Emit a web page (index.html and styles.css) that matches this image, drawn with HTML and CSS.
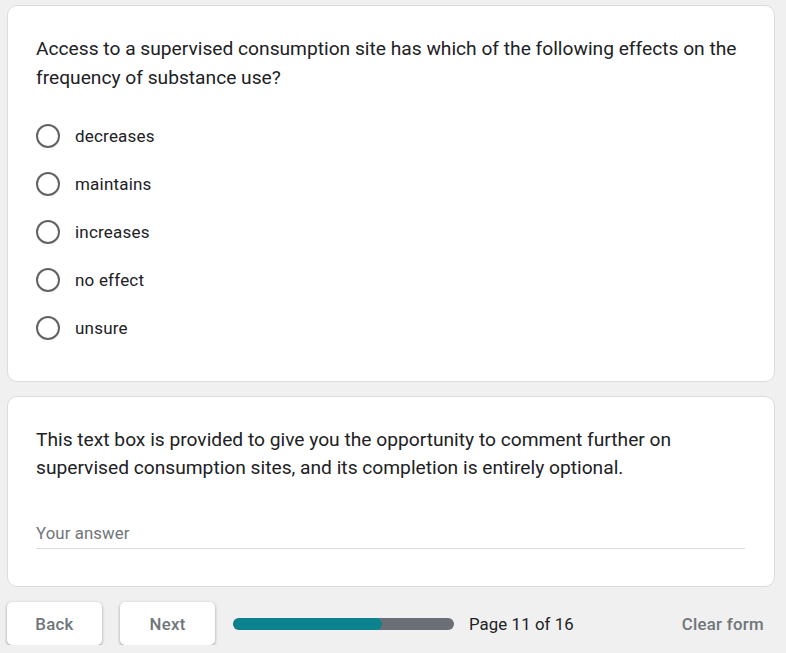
FILE: index.html
```html
<!DOCTYPE html>
<html>
<head>
<meta charset="utf-8">
<link rel="stylesheet" href="styles.css">
</head>
<body>
<main class="form">
  <section class="card">
    <div class="title">Access to a supervised consumption site has which of the following effects on the frequency of substance use?</div>
    <div class="options">
      <label class="option"><span class="radio"></span><span class="opt-text">decreases</span></label>
      <label class="option"><span class="radio"></span><span class="opt-text">maintains</span></label>
      <label class="option"><span class="radio"></span><span class="opt-text">increases</span></label>
      <label class="option"><span class="radio"></span><span class="opt-text">no effect</span></label>
      <label class="option"><span class="radio"></span><span class="opt-text">unsure</span></label>
    </div>
  </section>
  <section class="card card2">
    <div class="title">This text box is provided to give you the opportunity to comment further on supervised consumption sites, and its completion is entirely optional.</div>
    <div class="answer">Your answer</div>
  </section>
  <nav class="nav">
    <button class="btn">Back</button>
    <button class="btn">Next</button>
    <div class="progress"><div class="fill" style="width:67.5%"></div></div>
    <span class="page">Page 11 of 16</span>
    <span class="spacer"></span>
    <button class="clear">Clear form</button>
  </nav>
</main>
</body>
</html>
```
FILE: styles.css
```css
html, body {
  margin: 0;
  padding: 0;
  background: #f0f0f0;
}
body {
  font-family: Roboto, "Noto Sans", Arial, sans-serif;
  color: #202124;
}
.form {
  width: 768px;
  margin: 5px 0 0 7px;
}
.card {
  background: #fff;
  border: 1px solid #dadce0;
  border-radius: 10px;
  padding: 29px 29px 29px 28px;
  box-sizing: border-box;
}
.title {
  font-size: 19.2px;
  line-height: 28.8px;
  letter-spacing: 0;
  color: #202124;
}
.options {
  margin-top: 19px;
}
.option {
  display: flex;
  align-items: center;
  height: 48px;
}
.radio {
  width: 24px;
  height: 24px;
  box-sizing: border-box;
  border: 2.4px solid #5f6368;
  border-radius: 50%;
  flex: none;
}
.opt-text {
  margin-left: 15px;
  font-size: 17px;
  letter-spacing: 0.2px;
  color: #202124;
}
.card2 {
  margin-top: 14px;
  padding-bottom: 37px;
}
.answer {
  margin-top: 38px;
  font-size: 16.8px;
  line-height: 24px;
  color: #70757a;
  letter-spacing: 0.1px;
  padding-bottom: 3px;
  border-bottom: 1px solid #dadce0;
}
.nav {
  display: flex;
  align-items: center;
  margin-top: 15px;
}
.btn {
  width: 95px;
  height: 43px;
  border: none;
  border-radius: 5px;
  background: #fff;
  box-shadow: 0 1px 2px rgba(60,64,67,.3), 0 1px 3px 1px rgba(60,64,67,.15);
  font-family: Roboto, Arial, sans-serif;
  font-weight: 500;
  font-size: 16.8px;
  letter-spacing: 0.3px;
  color: #70757a;
  margin-right: 18px;
  padding: 0;
}
.progress {
  width: 221px;
  height: 12px;
  border-radius: 6px;
  background: #6b6e74;
  overflow: hidden;
  margin-right: 15px;
}
.fill {
  height: 100%;
  background: #0b828e;
  border-radius: 6px;
}
.page {
  font-size: 16.8px;
  letter-spacing: 0.1px;
  color: #202124;
}
.spacer { flex: 1; }
.clear {
  border: none;
  background: none;
  font-family: Roboto, Arial, sans-serif;
  font-weight: 500;
  font-size: 16.8px;
  letter-spacing: 0.3px;
  color: #70757a;
  padding: 0 11px 0 0;
}
```
